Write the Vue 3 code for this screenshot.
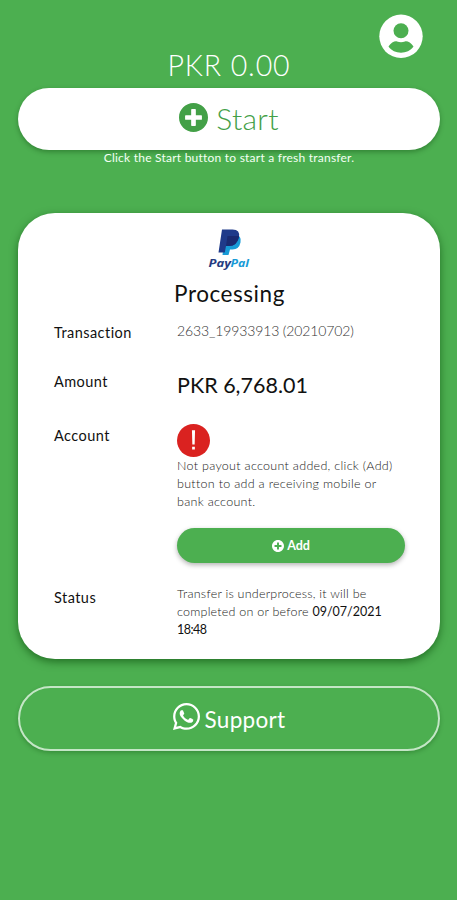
<script setup>
const plus =
  'M256 8C119 8 8 119 8 256s111 248 248 248 248-111 248-248S393 8 256 8zm144 276c0 6.600-5.400 12-12 12h-92v92c0 6.600-5.400 12-12 12h-56c-6.600 0-12-5.400-12-12v-92h-92c-6.600 0-12-5.400-12-12v-56c0-6.600 5.400-12 12-12h92v-92c0-6.600 5.400-12 12-12h56c6.600 0 12 5.400 12 12v92h92c6.600 0 12 5.400 12 12v56z'
</script>

<template>
  <main class="screen">
    <header class="top">
      <svg class="avatar" viewBox="0 0 44 44" aria-hidden="true">
        <circle cx="22" cy="22.300" r="21.700" fill="#fff" />
        <circle cx="22" cy="16.700" r="7.500" fill="#4caf50" />
        <path d="M9.500 32.500C12 28.500 16 26.800 18 27.500Q22 29 26 27.500C28 26.800 32 28.500 34.500 32.500C31.500 36.700 27 38.700 22 38.700S12.500 36.700 9.500 32.500Z" fill="#4caf50" />
      </svg>
    </header>
    <div class="balance"><span>PKR 0.00</span></div>
    <button class="start">
      <svg class="start-icon" viewBox="8 8 496 496" aria-hidden="true"><path :d="plus" fill="currentColor" /></svg>
      <span>Start</span>
    </button>
    <p class="hint"><span>Click the Start button to start a fresh transfer.</span></p>

    <section class="card">
      <svg class="paypal" viewBox="0 0 42 42" role="img" aria-label="PayPal">
        <path d="M16 6.500H26Q33 7.500 31.500 14.500Q30 21.500 23.500 21.500H21L19.500 27H13.500Z" fill="#179bd7" />
        <path d="M13 1.500H23.500Q31.500 1.500 30 9.500Q28 18 20 18H17L15.800 24.500H9.500Z" fill="#1f3a8a" />
        <path d="M18.500 8H30.200Q28 18 20 18H17Z" fill="#1a2a70" />
        <text x="-.5" y="38.500" textLength="22.500" lengthAdjust="spacingAndGlyphs" fill="#253b80">Pay</text>
        <text x="21.500" y="38.500" textLength="18.500" lengthAdjust="spacingAndGlyphs" fill="#179bd7">Pal</text>
      </svg>
      <h1><span>Processing</span></h1>
      <dl>
        <dt><span>Transaction</span></dt>
        <dd class="transaction"><span>2633_19933913 (20210702)</span></dd>
        <dt class="l-amount"><span>Amount</span></dt>
        <dd class="amount"><span>PKR 6,768.01</span></dd>
        <dt class="l-account"><span>Account</span></dt>
        <dd class="account">
          <svg class="alert" viewBox="0 0 34 34" aria-hidden="true">
            <circle cx="17" cy="17" r="17" fill="#da2220" />
            <path d="M15.400 6.500h3.200l-.4 14.500h-2.400zM15.600 23.500h2.800v2.800h-2.800z" fill="#fff" />
          </svg>
          <p class="copy">
            <span>Not payout account added, click (Add)</span><br />
            <span>button to add a receiving mobile or</span><br />
            <span>bank account.</span>
          </p>
          <button class="add">
            <svg class="add-icon" viewBox="8 8 496 496" aria-hidden="true"><path :d="plus" fill="currentColor" /></svg>
            <span>Add</span>
          </button>
        </dd>
        <dt class="l-status"><span>Status</span></dt>
        <dd class="copy status">
          <span>Transfer is underprocess, it will be</span><br />
          <span>completed on or before <b>09/07/2021</b></span><br />
          <b class="time">18:48</b>
        </dd>
      </dl>
    </section>

    <button class="support">
      <svg class="whatsapp" viewBox="0 32 448 448" aria-hidden="true">
        <path fill="currentColor" d="M380.900 97.100C339 55.100 283.200 32 223.900 32c-122.400 0-222 99.600-222 222 0 39.100 10.200 77.300 29.600 111L0 480l117.700-30.900c32.400 17.700 68.900 27 106.100 27h.1c122.300 0 224.100-99.600 224.100-222 0-59.300-25.200-115-67.100-157zm-157 341.600c-33.200 0-65.700-8.900-94-25.700l-6.700-4-69.800 18.300L72 359.200l-4.400-7c-18.500-29.400-28.200-63.300-28.200-98.200 0-101.700 82.800-184.500 184.600-184.500 49.300 0 95.600 19.200 130.400 54.100 34.800 34.900 56.200 81.200 56.100 130.500 0 101.800-84.900 184.600-186.600 184.600zm101.200-138.200c-5.500-2.800-32.800-16.200-37.900-18-5.100-1.900-8.800-2.800-12.500 2.800-3.700 5.600-14.300 18-17.600 21.800-3.200 3.700-6.500 4.200-12 1.400-32.600-16.300-54-29.100-75.500-66-5.700-9.800 5.700-9.100 16.300-30.300 1.800-3.700.9-6.900-.5-9.700-1.400-2.800-12.500-30.100-17.100-41.200-4.500-10.800-9.100-9.300-12.500-9.500-3.200-.2-6.900-.2-10.600-.2-3.700 0-9.700 1.400-14.800 6.900-5.100 5.600-19.400 19-19.400 46.300 0 27.300 19.900 53.700 22.600 57.400 2.800 3.700 39.100 59.700 94.800 83.800 35.200 15.200 49 16.500 66.600 13.900 10.700-1.600 32.800-13.400 37.400-26.400 4.600-13 4.600-24.100 3.200-26.400-1.300-2.500-5-3.900-10.500-6.600z" />
      </svg>
      <span>Support</span>
    </button>
  </main>
</template>

<style>
body { margin: 0; background: #4caf50; }
</style>

<style scoped>
* { box-sizing: border-box; }
.screen {
  min-height: 900px;
  padding: 0 17px 0 18px;
  background: #4caf50;
  font-family: Lato, "Liberation Sans", sans-serif;
  color: #111;
  white-space: nowrap;
}
.top { height: 48px; padding: 14px 17px 0 0; display: flex; justify-content: flex-end; }
.avatar { width: 44px; height: 44px; flex: none; }
.balance { height: 40px; line-height: 34px; text-align: center; color: #fff; font-size: 28.500px; font-weight: 300; letter-spacing: .9px; }
button { display: flex; align-items: center; justify-content: center; width: 100%; padding: 0; border: 0; font-family: inherit; }
.start { height: 62px; gap: 8px; padding-bottom: 3px; border-radius: 31px; background: #fff; color: #43a047; font-size: 30px; font-weight: 300; letter-spacing: .3px; box-shadow: 0 2px 5px rgba(0, 50, 0, .35); }
.start-icon { width: 29px; height: 29px; }
.hint { margin: 0; height: 63px; line-height: 16px; color: #f4fff4; font-size: 12px; letter-spacing: .230px; text-align: center; }
.card { height: 446px; padding: 15px 35px 0 36px; border-radius: 37px; background: #fff; box-shadow: 0 3px 9px rgba(0, 60, 0, .55); }
.paypal { display: block; width: 42px; height: 42px; margin: 0 auto; overflow: visible; }
.paypal text { font: italic 700 10.500px "Open Sans", sans-serif; }
h1 { margin: 9px 0 0; height: 38px; line-height: 29px; text-align: center; font-size: 22.500px; font-weight: 400; letter-spacing: .550px; }
dl { margin: 0; display: grid; grid-template-columns: 123px 228px; grid-template-rows: 52px 52px 164px 60px; }
dt { font-size: 14.500px; line-height: 20px; padding-top: 6px; letter-spacing: .450px; }
dd { margin: 0; }
.l-amount { padding-top: 3px; }
.l-account { padding-top: 5px; }
.l-status { padding-top: 3px; }
.transaction { padding-top: 4px; font-size: 14px; line-height: 20px; color: #333; font-weight: 300; letter-spacing: -.120px; }
.amount { padding-top: 2px; font-size: 21.500px; line-height: 28px; }
.account { padding-top: 3px; }
.alert { display: block; width: 33px; height: 33px; }
.copy { margin: 0; font-size: 12.500px; line-height: 18px; color: #222; font-weight: 300; letter-spacing: .3px; }
.status { letter-spacing: .230px; }
.copy b { color: #111; font-weight: 400; letter-spacing: 0; }
.copy .time { letter-spacing: -.5px; }
.add { height: 35px; margin-top: 17px; border-radius: 18px; gap: 3px; background: #4caf50; color: #fff; font-size: 12.500px; font-weight: 700; box-shadow: 0 2px 5px rgba(0, 0, 0, .3); }
.add-icon { width: 12px; height: 12px; }
.support { height: 65px; margin-top: 27px; gap: 5px; border: 2px solid #c4e6c6; border-radius: 33px; background: #4caf50; color: #fff; font-size: 22.500px; letter-spacing: .3px; box-shadow: 0 2px 4px rgba(0, 60, 0, .28); }
.support span { padding-top: 2px; }
.whatsapp { width: 27px; height: 27px; margin-bottom: 5px; }
</style>
